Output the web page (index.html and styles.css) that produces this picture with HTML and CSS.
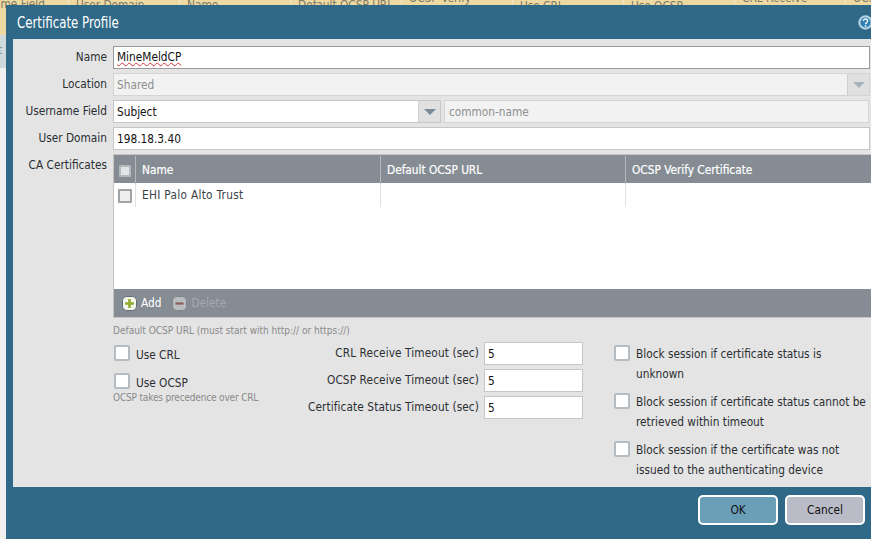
FILE: index.html
```html
<!DOCTYPE html>
<html lang="en">
<head>
<meta charset="UTF-8">
<title>Certificate Profile</title>
<link rel="stylesheet" href="styles.css">
</head>
<body>
    <div class="backdrop">
        <div class="back-head">
            <span class="back-col first">Username Field</span>
            <span class="back-col">User Domain</span>
            <span class="back-col">Name</span>
            <span class="back-col">Default OCSP URL</span>
            <span class="back-col high">OCSP Verify</span>
            <span class="back-col low">Use CRL</span>
            <span class="back-col low">Use OCSP</span>
            <span class="back-col high">CRL Receive</span>
            <span class="back-col high">OCSP</span>
        </div>
        <div class="back-row"><span>t</span></div>
    </div>

    <div class="dialog">
        <div class="dialog-title">
            <span class="title-text">Certificate Profile</span>
            <svg class="help" width="15" height="15" viewBox="0 0 15 15">
                <circle cx="7.5" cy="7.5" r="7.2" fill="#b4d2e2"/>
                <circle cx="7.5" cy="7.5" r="5" fill="#2f7fb0"/>
                <path d="M5.4 6a2.1 2 0 1 1 3.3 1.6c-.8.5-1.2.9-1.2 1.6" fill="none" stroke="#fff" stroke-width="1.4"/>
                <rect x="6.8" y="10.2" width="1.5" height="1.5" fill="#fff"/>
            </svg>
        </div>

        <div class="dialog-body">
            <div class="form-row">
                <label>Name</label>
                <div class="field main"><span class="misspelt">MineMeldCP</span></div>
            </div>
            <div class="form-row">
                <label>Location</label>
                <div class="select off">
                    <span class="select-text">Shared</span>
                    <span class="select-arrow"><i></i></span>
                </div>
            </div>
            <div class="form-row">
                <label>Username Field</label>
                <div class="pair">
                    <div class="select">
                        <span class="select-text">Subject</span>
                        <span class="select-arrow"><i></i></span>
                    </div>
                    <input class="field off" type="text" value="common-name" disabled>
                </div>
            </div>
            <div class="form-row">
                <label>User Domain</label>
                <input class="field" type="text" value="198.18.3.40">
            </div>
            <div class="form-row table-row">
                <label>CA Certificates</label>
                <div class="grid">
                    <div class="grid-head">
                        <div class="cell"><input class="check small head-check" type="checkbox"></div>
                        <div class="cell">Name</div>
                        <div class="cell">Default OCSP URL</div>
                        <div class="cell">OCSP Verify Certificate</div>
                    </div>
                    <div class="grid-body">
                        <div class="grid-line">
                            <div class="cell"><input class="check small" type="checkbox"></div>
                            <div class="cell">EHI Palo Alto Trust</div>
                            <div class="cell"></div>
                            <div class="cell"></div>
                        </div>
                    </div>
                    <div class="grid-tools">
                        <span class="tool">
                            <svg width="15" height="15" viewBox="0 0 15 15">
                                <rect x=".5" y=".5" width="14" height="14" rx="4" fill="#f4f6ee" stroke="#5d6a72"/>
                                <path d="M7.5 3v9M3 7.5h9" stroke="#8fae2e" stroke-width="2.6"/>
                            </svg>
                            Add
                        </span>
                        <span class="tool disabled">
                            <svg width="15" height="15" viewBox="0 0 15 15">
                                <rect x=".5" y=".5" width="14" height="14" rx="4" fill="#b9bdc0" stroke="#7b8389"/>
                                <path d="M3.5 7.5h8" stroke="#8a5f58" stroke-width="2.2"/>
                            </svg>
                            Delete
                        </span>
                    </div>
                </div>
            </div>
            <p class="hint url-hint">Default OCSP URL (must start with http:// or https://)</p>

            <div class="options">
                <div class="opt-left">
                    <label class="opt"><input class="check" type="checkbox"><span>Use CRL</span></label>
                    <label class="opt"><input class="check" type="checkbox"><span>Use OCSP</span></label>
                    <p class="hint">OCSP takes precedence over CRL</p>
                </div>
                <div class="opt-middle">
                    <div class="timeout"><label>CRL Receive Timeout (sec)</label><input class="field" type="text" value="5"></div>
                    <div class="timeout"><label>OCSP Receive Timeout (sec)</label><input class="field" type="text" value="5"></div>
                    <div class="timeout"><label>Certificate Status Timeout (sec)</label><input class="field" type="text" value="5"></div>
                </div>
                <div class="opt-right">
                    <label class="opt"><input class="check" type="checkbox"><span>Block session if certificate status is unknown</span></label>
                    <label class="opt"><input class="check" type="checkbox"><span>Block session if certificate status cannot be retrieved within timeout</span></label>
                    <label class="opt"><input class="check" type="checkbox"><span>Block session if the certificate was not issued to the authenticating device</span></label>
                </div>
            </div>
        </div>

        <div class="dialog-foot">
            <button class="btn ok">OK</button>
            <button class="btn">Cancel</button>
        </div>
    </div>
</body>
</html>
```

FILE: styles.css
```css
html, body {
    margin: 0;
    height: 100%;
    overflow: hidden;
}
body {
    font-family: "DejaVu Sans Condensed", "DejaVu Sans", sans-serif;
    font-size: 11.75px;
    color: #2b2f33;
    background-color: #f0f0f0;
}

/* page behind the dialog */
.back-head {
    display: flex;
    height: 35px;
    overflow: hidden;
    background-color: #eed9a2;
    color: #7d7a66;
    line-height: 14px;
}
.back-col {
    flex: 0 0 111px;
    min-width: 0;
    box-sizing: border-box;
    margin-top: -2px;
    padding-left: 7px;
    border-right: 1px solid #f5e8c6;
    white-space: nowrap;
}
.back-col.first {
    flex: 0 0 69px;
    margin-top: -3px;
    padding: 0 23px 0 0;
    direction: rtl;
}
.back-col.low {
    margin-top: -1px;
}
.back-col.high {
    margin-top: -9px;
}
.back-row {
    height: 33px;
    background-color: #d0d9dc;
    color: #8c979b;
    line-height: 30px;
}
.back-row span {
    margin-left: -2px;
}

/* dialog */
.dialog {
    position: absolute;
    left: 6px;
    top: 5px;
    width: 865px;
    height: 534px;
    overflow: hidden;
    display: flex;
    flex-direction: column;
    background-color: #306987;
}
.dialog-title {
    flex: 0 0 34px;
    display: flex;
    justify-content: space-between;
    align-items: center;
    padding-left: 11px;
    color: white;
    font-size: 16px;
}
.title-text {
    transform: scaleX(.82);
    transform-origin: left center;
}
.help {
    margin-right: -2px;
    margin-top: 1px;
}
.dialog-body {
    flex: 0 0 447px;
    box-sizing: border-box;
    margin-left: 7px;
    padding-top: 7px;
    background-color: #e4e4e4;
}
.dialog-foot {
    flex: 1;
    display: flex;
    justify-content: flex-end;
    gap: 7px;
    padding: 8px 6px 0 0;
}

/* form */
.form-row {
    display: flex;
    gap: 6px;
    height: 23px;
    margin-bottom: 4px;
}
.form-row > label {
    flex: 0 0 94px;
    text-align: right;
    line-height: 22px;
    white-space: nowrap;
}
.field {
    box-sizing: border-box;
    height: 23px;
    padding: 0 3px;
    border: 1px solid #c6c6c6;
    border-radius: 0;
    outline: none;
    background-color: white;
    color: #111;
    font: inherit;
    line-height: 21px;
}
.form-row > .field {
    width: 757px;
}
.field.main {
    border-color: #9a9a9a;
}
.misspelt {
    text-decoration: underline wavy #d8343c 1px;
}
.field.off {
    flex: 1;
    min-width: 0;
    margin-right: 1px;
    border-color: #d4d4d4;
    background-color: #f2f2f2;
    color: #8f8f8f;
    padding-left: 4px;
}
.pair {
    display: flex;
    gap: 3px;
    width: 757px;
}
.select {
    box-sizing: border-box;
    display: flex;
    width: 757px;
    height: 23px;
    border: 1px solid #c6c6c6;
    background-color: white;
    color: #111;
}
.pair .select {
    flex: 0 0 328px;
    width: 328px;
}
.select.off {
    border-color: #d4d4d4;
    background-color: #f2f2f2;
    color: #8f8f8f;
}
.select-text {
    flex: 1;
    padding-left: 3px;
    line-height: 23px;
}
.select-arrow {
    flex: 0 0 21px;
    display: flex;
    align-items: center;
    justify-content: center;
    background-color: #e0e0e0;
    border-left: 1px solid #cfcfcf;
}
.select-arrow i {
    width: 0;
    height: 0;
    border-left: 6px solid transparent;
    border-right: 6px solid transparent;
    border-top: 6px solid #7d8b96;
}
.select.off .select-arrow i {
    border-top-color: #a9b3bb;
}

/* table */
.table-row {
    height: 164px;
    margin-bottom: 0;
}
.grid {
    box-sizing: border-box;
    display: flex;
    flex-direction: column;
    width: 758px;
    height: 164px;
    border: 1px solid #c4c4c4;
    border-right: none;
    background-color: white;
}
.grid-head, .grid-line {
    display: grid;
    grid-template-columns: 22px 245px 245px 1fr;
}
.grid-head {
    height: 28px;
    background-color: #858c93;
    color: white;
    -webkit-text-stroke: .2px white;
}
.grid-head .cell {
    line-height: 29px;
    padding-left: 6px;
    border-right: 1px solid #b4b9bd;
    margin-top: 1px;
}
.grid-body {
    flex: 1;
    padding-top: 1px;
}
.grid-line {
    height: 21px;
    color: #3a4248;
    letter-spacing: .3px;
}
.grid-line .cell {
    line-height: 23px;
    padding-left: 6px;
    border-right: 1px solid #e2e2e2;
}
.grid .cell:first-child {
    display: flex;
    align-items: center;
    padding-left: 4px;
}
.grid .cell:last-child {
    border-right: none;
}
.grid-tools {
    display: flex;
    align-items: center;
    gap: 11px;
    height: 28px;
    padding-left: 8px;
    background-color: #858c93;
    color: white;
}
.tool {
    display: flex;
    align-items: center;
    gap: 4px;
}
.tool.disabled {
    color: #a4aaaf;
}

/* checkboxes */
.check {
    appearance: none;
    flex: none;
    box-sizing: border-box;
    width: 16px;
    height: 16px;
    margin: 0;
    border: 2px solid #b5bdc3;
    border-radius: 2px;
    background-color: white;
}
.check.small {
    width: 14px;
    height: 14px;
    border: 2px solid #9ea3a8;
    border-radius: 1px;
    background-color: #efefef;
}
.check.head-check {
    margin-left: 1px;
    width: 12px;
    height: 12px;
    border-color: #b4b9bd;
    background-color: #e2e4e6;
}

/* options under the table */
.hint {
    margin: 0;
    color: #8a8a8a;
    font-size: 10px;
}
.url-hint {
    margin: 6px 0 0 100px;
    line-height: 13px;
}
.options {
    display: flex;
    margin-top: 5px;
}
.opt {
    display: flex;
    gap: 6px;
    line-height: 20px;
}
.opt .check {
    margin-top: 2px;
}
.opt span {
    padding-top: 1px;
}
.opt-left {
    flex: 0 0 193px;
    margin-left: 101px;
    padding-top: 1px;
}
.opt-left .opt {
    height: 20px;
    margin-bottom: 8px;
}
.opt-left .opt span {
    padding-top: 2px;
}
.opt-left .hint {
    margin: -7px 0 0 -1px;
    line-height: 12px;
    letter-spacing: -.17px;
}
.opt-middle {
    flex: 0 0 276px;
    display: flex;
    flex-direction: column;
    gap: 4px;
}
.timeout {
    display: flex;
    justify-content: flex-end;
    gap: 5px;
    line-height: 22px;
    letter-spacing: .1px;
}
.timeout .field {
    width: 99px;
}
.opt-right {
    flex: 0 0 255px;
    margin-left: 31px;
    padding-top: 1px;
}
.opt-right .opt {
    margin-bottom: 7px;
}

/* buttons */
.btn {
    box-sizing: border-box;
    width: 80px;
    height: 30px;
    border: 2px solid white;
    border-radius: 5px;
    background-color: #b9bcc6;
    color: #111;
    font: inherit;
}
.btn.ok {
    background-color: #6b9fb8;
}
```
